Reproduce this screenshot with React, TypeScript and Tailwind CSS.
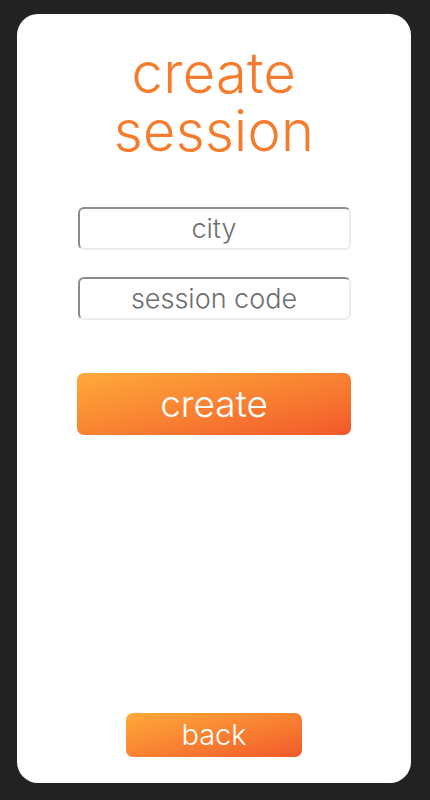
import React from "react";

export default function App() {
  const font = { fontFamily: '"Inter", "Liberation Sans", sans-serif' };
  return (
    <div className="w-[430px] h-[800px] bg-[#222222] pt-[14px] pb-[17px] pl-[17px] pr-[19px]" style={font}>
      <div className="h-full bg-white rounded-[21px] flex flex-col items-center">
        <h1 className="mt-[30px] text-[56px] leading-[58px] font-light text-[#f47c2c] text-center tracking-[0.3px] flex flex-col items-center">
          <span>create</span>
          <span>session</span>
        </h1>
        <div className="mt-[47px] flex flex-col gap-[27px]">
          <input
            placeholder="city"
            className="w-[273px] h-[43px] rounded-[6px] border-2 border-t-[#8c8c8c] border-l-[#8c8c8c] border-b-[#ececec] border-r-[#ececec] text-center text-[27px] font-light placeholder:text-[#6e6e6e] outline-none"
          />
          <input
            placeholder="session code"
            className="w-[273px] h-[43px] rounded-[6px] border-2 border-t-[#8c8c8c] border-l-[#8c8c8c] border-b-[#ececec] border-r-[#ececec] text-center text-[27px] font-light placeholder:text-[#6e6e6e] outline-none"
          />
        </div>
        <button className="mt-[53px] w-[274px] h-[62px] rounded-[7px] bg-gradient-to-br from-[#fea93a] to-[#f1582a] text-white text-[37px] font-light">
          create
        </button>
        <div className="flex-1" />
        <button className="mb-[26px] w-[176px] h-[44px] rounded-[7px] bg-gradient-to-br from-[#fea93a] to-[#f1582a] text-white text-[29px] font-light">
          back
        </button>
      </div>
    </div>
  );
}
